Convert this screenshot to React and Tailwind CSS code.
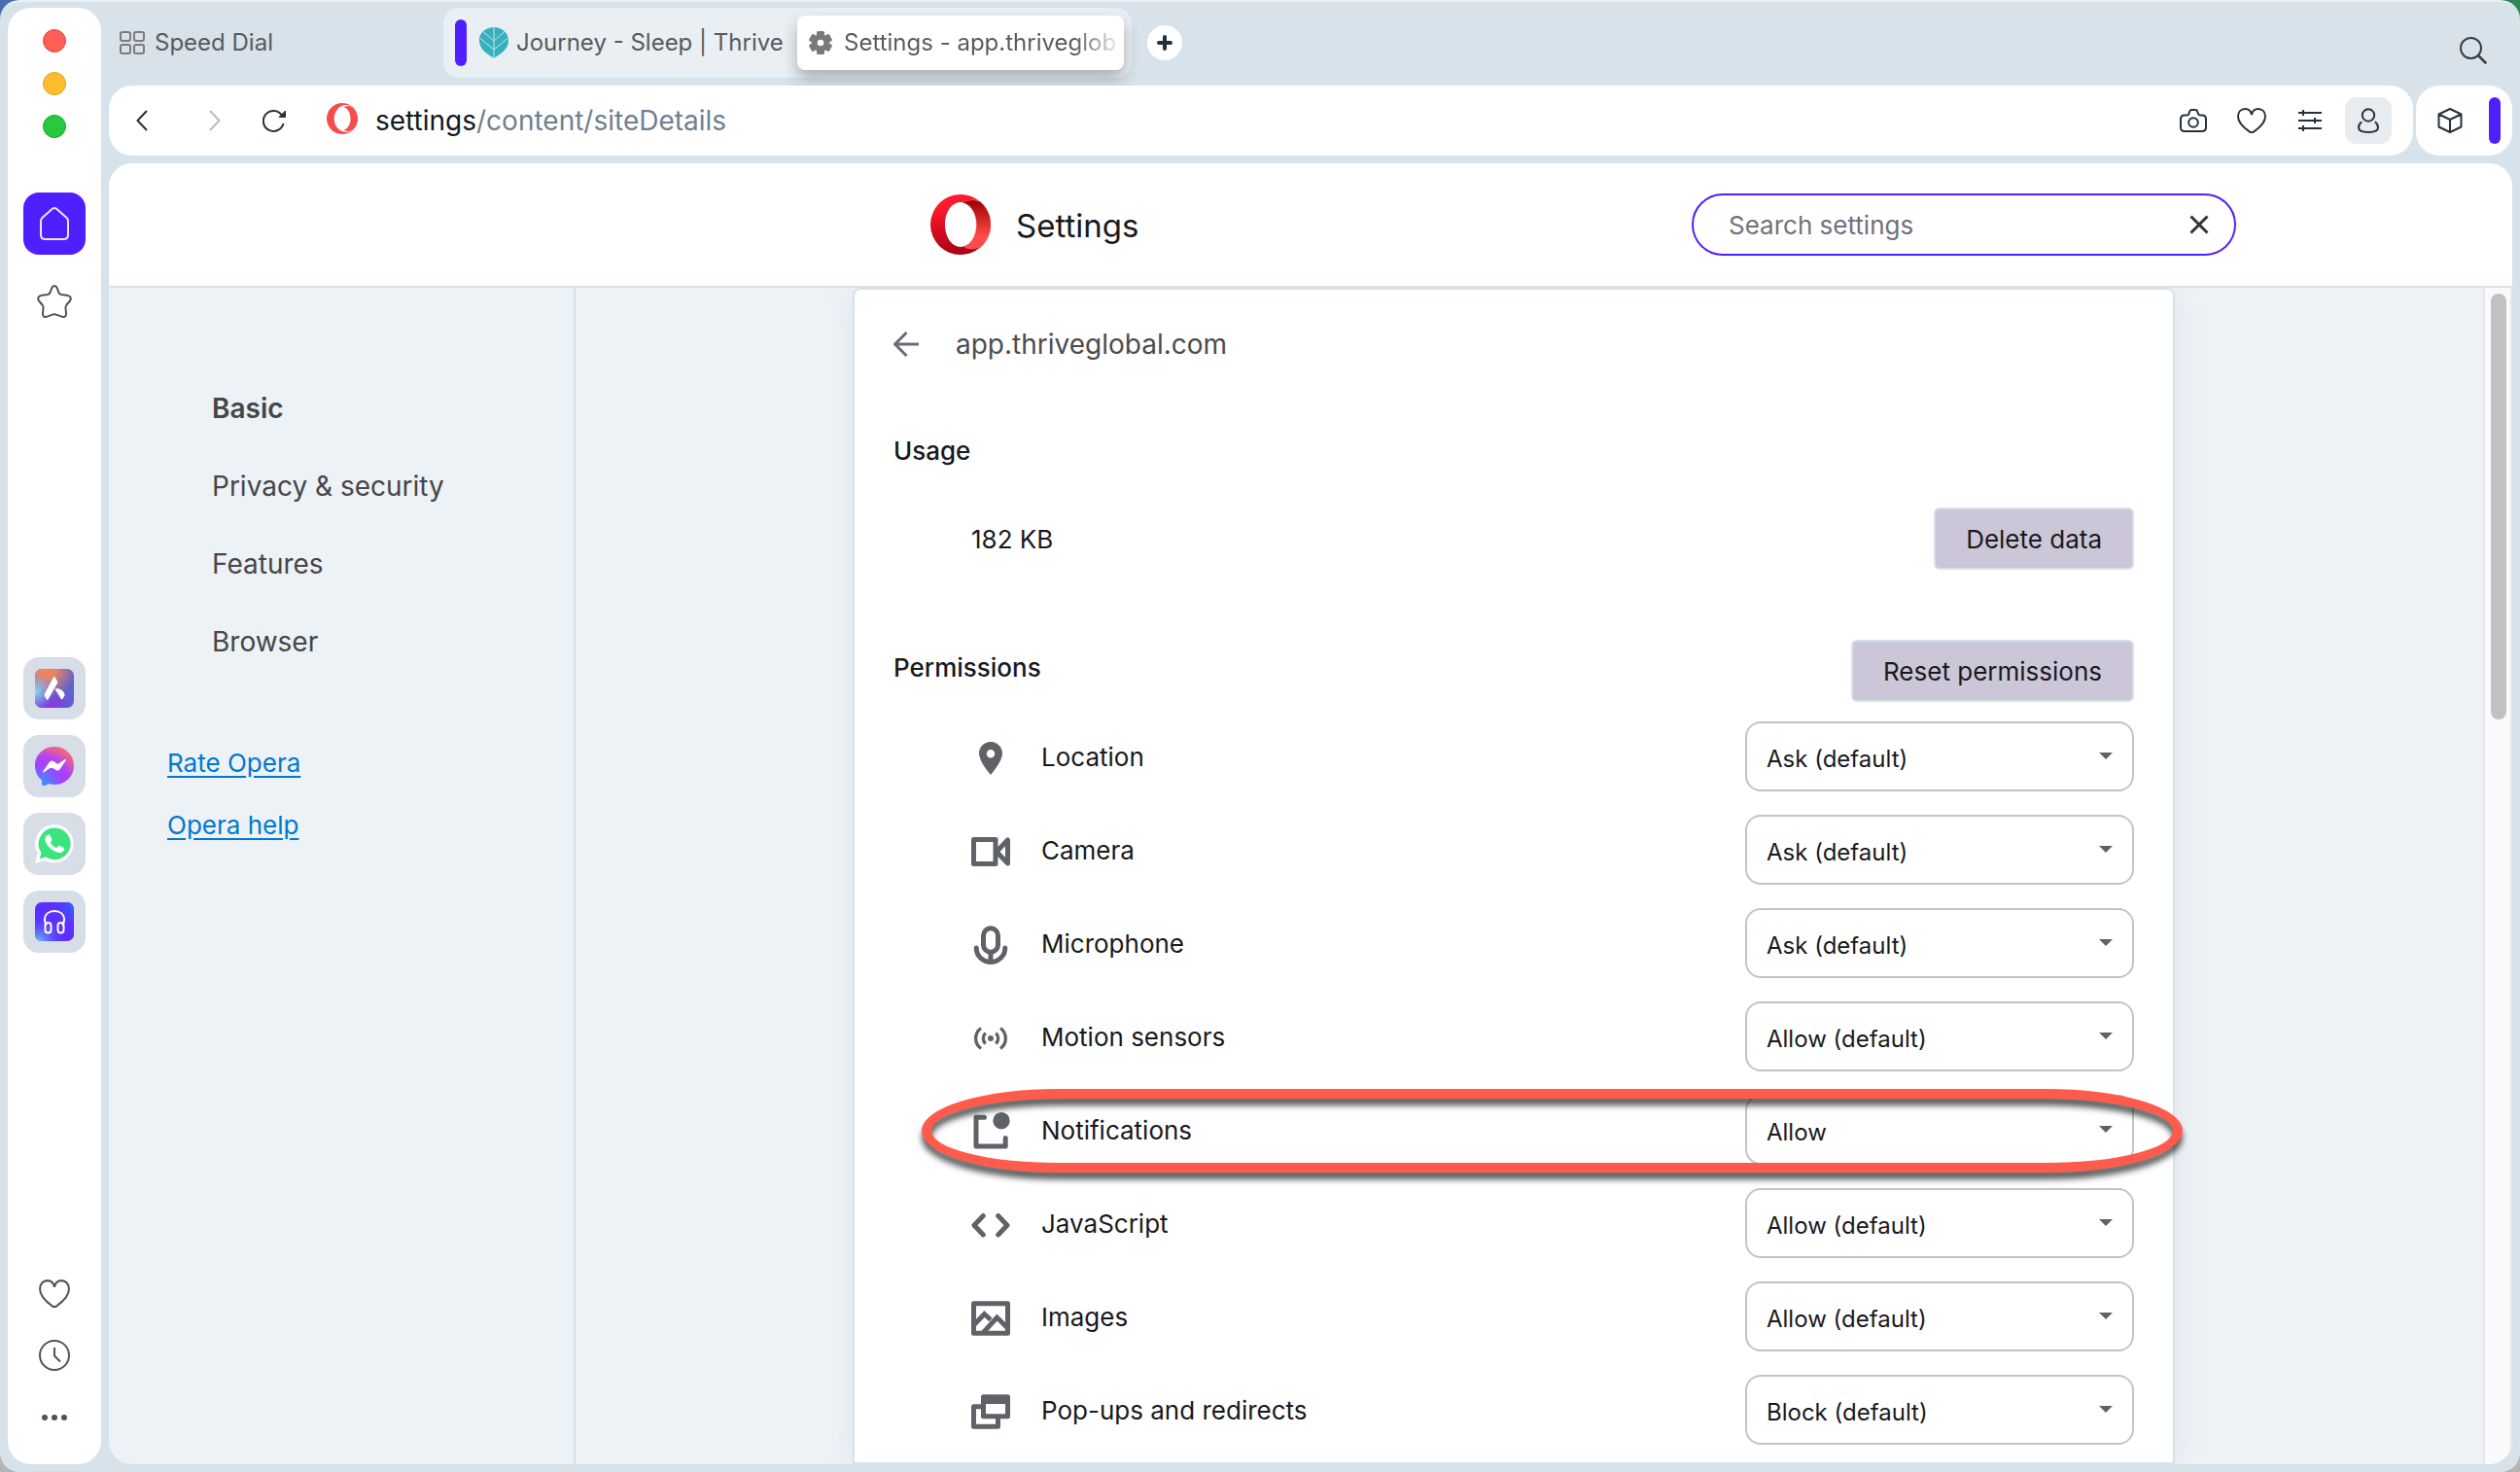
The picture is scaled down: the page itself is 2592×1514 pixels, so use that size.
import { useId, useState } from "react";

const HEART =
  "M15 7C14.300 3.200 11.500 1 8.200 1 4 1 1 4.200 1 9c0 7 7.500 12.500 12 15.600 1.400.9 2.600.9 4 0C21.500 21.500 29 16 29 9c0-4.800-3-8-7.200-8C18.500 1 15.700 3.200 15 7z";

const OPERA_LEFT =
  "M8.051 5.238c-1.328 1.566-2.186 3.883-2.246 6.480v.564c.061 2.598.918 4.912 2.246 6.479 1.721 2.236 4.279 3.654 7.139 3.654 1.756 0 3.400-.537 4.807-1.471C17.879 22.846 15.074 24 12 24c-.192 0-.383-.004-.57-.014C5.064 23.689 0 18.436 0 12 0 5.371 5.373 0 12 0h.045c3.055.012 5.840 1.166 7.953 3.055-1.408-.93-3.051-1.471-4.810-1.471-2.858 0-5.417 1.420-7.140 3.654h.003z";
const OPERA_RIGHT =
  "M24 12c0 3.556-1.545 6.748-4.002 8.945-3.078 1.500-5.946.451-6.896-.205 3.023-.664 5.307-4.320 5.307-8.740 0-4.422-2.283-8.075-5.307-8.740.949-.654 3.818-1.703 6.896-.205C22.455 5.250 24 8.444 24 12z";

function Line({ w, h, stroke = 2, className = "", children }) {
  return (
    <svg width={w} height={h} viewBox={`0 0 ${w} ${h}`} fill="none" stroke="currentColor" strokeWidth={stroke} className={`shrink-0 ${className}`} aria-hidden="true">
      {children}
    </svg>
  );
}

function OperaFlat() {
  return (
    <svg width="32" height="32" viewBox="0 0 24 24" fill="#f84c4b" className="shrink-0" aria-hidden="true">
      <path d={OPERA_LEFT} />
      <path d={OPERA_RIGHT} />
    </svg>
  );
}

function OperaLogo() {
  const id = useId();
  return (
    <svg width="62" height="62" viewBox="0 0 24 24" className="shrink-0" aria-hidden="true">
      <defs>
        <linearGradient id={`${id}l`} x1="0" y1="0" x2="0" y2="1">
          <stop offset="0.2" stopColor="#ff1b2d" />
          <stop offset="1" stopColor="#a70014" />
        </linearGradient>
        <linearGradient id={`${id}r`} x1="0" y1="0" x2="0" y2="1">
          <stop offset="0" stopColor="#9c0000" />
          <stop offset="0.75" stopColor="#ff4b4b" />
        </linearGradient>
      </defs>
      <path d={OPERA_RIGHT} fill={`url(#${id}r)`} stroke={`url(#${id}r)`} strokeWidth="0.2" />
      <path
        fillRule="evenodd"
        fill={`url(#${id}l)`}
        d="M12 0a12 12 0 1 0 0 24c3.074 0 5.879-1.154 7.998-3.055-2.800 1.350-5.400.8-6.896-.205-.35.080-.7.120-1.100.120-3.500 0-6.200-3.900-6.200-8.860s2.700-8.860 6.200-8.860c.4 0 .75.040 1.100.120 1.500-1 4.100-1.550 6.896-.205A11.970 11.970 0 0 0 12 0z"
      />
    </svg>
  );
}

function Leaf() {
  return (
    <svg width="30" height="32" viewBox="0 0 30 32" className="shrink-0" aria-hidden="true">
      <path d="M15 0c4 0 15 2.500 15 14 0 9.500-10 14.500-15 18C10 28.500 0 23.500 0 14 0 2.500 11 0 15 0z" fill="#36b0bd" />
      <path d="M15 0v32M15 14L4 4.500M15 14L26 4.500M15 23L1 11.500M15 23L29 11.500" stroke="#c9e6ec" fill="none" />
    </svg>
  );
}

function Gear() {
  return (
    <svg width="24" height="24" viewBox="0 0 24 24" fill="#7a7a7a" className="shrink-0" aria-hidden="true">
      <circle cx="12" cy="12" r="9" />
      <rect x="8" y="0" width="8" height="24" rx="1.500" />
      <rect x="8" y="0" width="8" height="24" rx="1.500" transform="rotate(60 12 12)" />
      <rect x="8" y="0" width="8" height="24" rx="1.500" transform="rotate(120 12 12)" />
      <circle cx="12" cy="12" r="3.300" fill="#fff" />
    </svg>
  );
}

function AriaIcon() {
  const id = useId();
  return (
    <svg width="40" height="40" viewBox="0 0 40 40" aria-hidden="true">
      <defs>
        <radialGradient id={`${id}a`} cx="0.3" cy="0" r="0.75">
          <stop offset="0" stopColor="#ff8552" />
          <stop offset="0.35" stopColor="#f08462" stopOpacity="0.9" />
          <stop offset="1" stopColor="#f08462" stopOpacity="0" />
        </radialGradient>
        <radialGradient id={`${id}b`} cx="0" cy="0.58" r="0.5">
          <stop offset="0" stopColor="#86e0f2" />
          <stop offset="1" stopColor="#86b0f2" stopOpacity="0" />
        </radialGradient>
        <radialGradient id={`${id}c`} cx="0.4" cy="1" r="0.6">
          <stop offset="0" stopColor="#8d32e4" />
          <stop offset="1" stopColor="#8d32e4" stopOpacity="0" />
        </radialGradient>
      </defs>
      <rect width="40" height="40" rx="7" fill="#6062cc" />
      <rect width="40" height="40" rx="7" fill={`url(#${id}c)`} />
      <rect width="40" height="40" rx="7" fill={`url(#${id}a)`} />
      <rect width="40" height="40" rx="7" fill={`url(#${id}b)`} />
      <path d="M20.500 8.500l2.700 4.500c.3.500.3 1 0 1.500L13.500 31.200c-.5.700-1.300.7-1.700 0l-2-3.700c-.3-.6-.3-1.200 0-1.800l9-17c.5-.8 1.200-.9 1.700-.2z" fill="#fff" />
      <path d="M21.500 20.200c4.500 0 8 2 9 5.800.2.700 0 1.300-.3 1.800l-1.700 3c-.5.800-1.300.8-1.800 0l-5.800-9.600c-.3-.6 0-1 .6-1z" fill="#fff" />
    </svg>
  );
}

function MessengerIcon() {
  const id = useId();
  return (
    <svg width="40" height="40" viewBox="0 0 40 40" aria-hidden="true">
      <defs>
        <radialGradient id={id} cx="0.18" cy="1" r="1.100">
          <stop offset="0" stopColor="#2f9cff" />
          <stop offset="0.5" stopColor="#a440ff" />
          <stop offset="0.68" stopColor="#b145f2" />
          <stop offset="1" stopColor="#ff6a70" />
        </radialGradient>
      </defs>
      <path d="M20 0c11.300 0 20 8.500 20 19.500S31.300 39 20 39c-1.900 0-3.800-.3-5.600-.8l-4.600 1.700c-1.500.6-2.800.1-2.800-1.500v-3.900C2.500 31 0 25.500 0 19.500 0 8.500 8.700 0 20 0z" fill={`url(#${id})`} />
      <path d="M8.700 25.800l6.600-9.300c.9-1.200 2.500-1.400 3.700-.6l4.300 3 8-5.200-6.200 9c-.9 1.200-2.500 1.500-3.700.6l-4.500-3.200z" fill="#fff" stroke="#fff" strokeWidth="1.400" strokeLinejoin="round" />
    </svg>
  );
}

function WhatsAppIcon() {
  return (
    <svg width="40" height="40" viewBox="0 0 40 40" aria-hidden="true">
      <path d="M20 0a19.700 19.700 0 1 1-9.500 37L0 39.800l2.900-10.200A19.700 19.700 0 0 1 20 0z" fill="#fff" />
      <path d="M20 3.400a16.400 16.400 0 1 1-8.700 30.200l-6.600 1.700 1.800-6.300A16.400 16.400 0 0 1 20 3.400z" fill="#3be47f" />
      <path d="M12.600 11c.8-.8 2.600-.9 3.200.5l1.500 3.600c.3.800.1 1.400-.5 2l-1 1.200c1.300 2.700 3.500 4.800 6.300 6l1.600-1.900c.5-.6 1.100-.7 1.800-.4l3.700 1.700c.9.500 1.100 1.200.8 2.200-.8 2.400-3.100 3.500-5.500 3-7-1.500-13-7.500-14.100-13-.4-2.100.6-3.700 2.200-4.900z" fill="#fff" />
    </svg>
  );
}

function PlayerIcon() {
  const id = useId();
  return (
    <svg width="40" height="40" viewBox="0 0 40 40" aria-hidden="true">
      <defs>
        <radialGradient id={`${id}a`} cx="0.1" cy="1" r="0.7">
          <stop offset="0" stopColor="#69b8ff" />
          <stop offset="1" stopColor="#5a35ff" stopOpacity="0" />
        </radialGradient>
        <radialGradient id={`${id}b`} cx="1" cy="0.1" r="0.6">
          <stop offset="0" stopColor="#2a66ff" />
          <stop offset="1" stopColor="#5a35ff" stopOpacity="0" />
        </radialGradient>
      </defs>
      <rect width="40" height="40" rx="7" fill="#5b2fff" />
      <rect width="40" height="40" rx="7" fill={`url(#${id}b)`} />
      <rect width="40" height="40" rx="7" fill={`url(#${id}a)`} />
      <g fill="none" stroke="#fff" strokeWidth="2" strokeLinecap="round">
        <path d="M11.500 23c-1-1.700-1.500-3.400-1.500-5C10 12.500 14 9 20 9s10 3.500 10 9c0 1.600-.5 3.300-1.500 5" />
        <rect x="10.500" y="21" width="6" height="10.500" rx="3" />
        <rect x="23.500" y="21" width="6" height="10.500" rx="3" />
      </g>
    </svg>
  );
}

const permissionArt = {
  location: (
    <path fill="currentColor" stroke="none" fillRule="evenodd" d="M20 3C13.300 3 8 8.200 8 14.800 8 23.500 20 37 20 37s12-13.500 12-22.200C32 8.200 26.700 3 20 3zm0 8a4.200 4.200 0 1 1 0 8.400 4.200 4.200 0 0 1 0-8.400z" />
  ),
  camera: (
    <g strokeLinejoin="round">
      <path d="M2.500 7.500H25v25H2.500z" />
      <path d="M26 20L37.500 8v24z" />
    </g>
  ),
  microphone: (
    <g strokeLinecap="round">
      <rect x="12.500" y="2.800" width="15" height="24.500" rx="7.500" />
      <path d="M5.200 23a14.800 14.500 0 0 0 29.600 0" />
      <path d="M20 28v9" />
    </g>
  ),
  motion: (
    <g strokeWidth="3.300">
      <path d="M10 9.500A13 13 0 0 0 10 30.500M30 9.500A13 13 0 0 1 30 30.500M14.700 14.500A7.500 7.500 0 0 0 14.700 25.500M25.300 14.500A7.500 7.500 0 0 1 25.300 25.500" />
      <circle cx="20" cy="20" r="3" fill="currentColor" stroke="none" />
    </g>
  ),
  notifications: (
    <g strokeLinecap="round" strokeLinejoin="round">
      <path d="M13.500 5.200H5V35h30.200v-8.500" />
      <circle cx="31" cy="8.700" r="8.700" fill="currentColor" stroke="none" />
    </g>
  ),
  code: <path strokeLinecap="round" strokeLinejoin="round" d="M12.300 10.500L3 20.200l9.300 9.700M27.700 10.500L37 20.200l-9.300 9.700" />,
  images: (
    <g strokeLinejoin="round">
      <rect x="2.500" y="4.800" width="35" height="30.500" />
      <path d="M3.500 26l10-10.500 6.500 6M12 35l14.500-16L38 30.500" strokeLinejoin="miter" />
    </g>
  ),
  popups: (
    <g strokeLinejoin="round">
      <path d="M10 14.800H2.500v20.400h25V27" />
      <rect x="12.500" y="4.800" width="25" height="20" />
      <path d="M12.500 8h25" strokeWidth="8" />
    </g>
  ),
};

const permissions = [
  { icon: "location", label: "Location", value: "Ask (default)" },
  { icon: "camera", label: "Camera", value: "Ask (default)" },
  { icon: "microphone", label: "Microphone", value: "Ask (default)" },
  { icon: "motion", label: "Motion sensors", value: "Allow (default)" },
  { icon: "notifications", label: "Notifications", value: "Allow", marked: true },
  { icon: "code", label: "JavaScript", value: "Allow (default)" },
  { icon: "images", label: "Images", value: "Allow (default)" },
  { icon: "popups", label: "Pop-ups and redirects", value: "Block (default)" },
];

function PermissionRow({ icon, label, value, marked }) {
  const id = useId();
  const [choice, setChoice] = useState(value);
  const options = [...new Set([value, "Ask", "Allow", "Block"])];
  return (
    <li className="relative flex h-24 items-center pl-20">
      <Line w={40} h={40} stroke={5} className="mt-1 text-[#5f6368]">
        {permissionArt[icon]}
      </Line>
      <label htmlFor={id} className="ml-8 flex-1">
        {label}
      </label>
      <div className="relative w-[400px]">
        <select
          id={id}
          value={choice}
          onChange={(e) => setChoice(e.target.value)}
          className="h-[72px] w-full appearance-none rounded-2xl border-2 border-[#c4c4c4] bg-white pt-1.5 pl-5 text-2xl text-[#19191d]"
        >
          {options.map((o) => (
            <option key={o}>{o}</option>
          ))}
        </select>
        <svg width="14" height="7" viewBox="0 0 14 7" className="pointer-events-none absolute top-8 right-[22px]" aria-hidden="true">
          <path d="M0 0h14L7 7z" fill="#5f6368" />
        </svg>
      </div>
      {marked && (
        <div className="pointer-events-none absolute top-[6px] -right-[50px] left-[29px] h-[86px] rounded-[140px/43px] border-10 border-[#ff5b4d] drop-shadow-[0_7px_3px_rgba(0,0,0,0.65)]" />
      )}
    </li>
  );
}

function Sidebar() {
  const round = "flex h-16 w-16 items-center justify-center rounded-2xl";
  return (
    <aside className="flex w-24 shrink-0 flex-col items-center rounded-3xl bg-white pt-[22px] pb-4 text-[#4b535e]">
      <div className="flex flex-col gap-5">
        <button aria-label="Close" className="size-6 rounded-full border border-[#e2463f] bg-[#ff5f57]" />
        <button aria-label="Minimise" className="size-6 rounded-full border border-[#e1a116] bg-[#febc2e]" />
        <button aria-label="Zoom" className="size-6 rounded-full border border-[#12ac28] bg-[#28c840]" />
      </div>
      <button aria-label="Home" className={`${round} mt-14 bg-[#4f1fff] text-[#ece8ff]`}>
        <Line w={30} h={34}>
          <path d="M12.300 2.200c1.700-1.500 3.700-1.500 5.400 0l9.600 8.600c1.200 1 1.700 2.200 1.700 3.700V28.500c0 3-1.500 4.500-4.500 4.500h-19C2.500 33 1 31.500 1 28.500v-14c0-1.500.5-2.700 1.700-3.700z" />
        </Line>
      </button>
      <button aria-label="Favourites" className={`${round} mt-4`}>
        <Line w={36} h={34}>
          <path d="M15.300 3.200c1-2.900 4.400-2.900 5.400 0l1.800 4.800c.5 1.200 1.500 1.800 2.700 2l5.800.8c3.500.5 5 3.200 2.500 6.200l-3 3.500c-.8 1-1.100 2-1 3.300l.5 5.200c.2 3.500-1.500 4.800-4.500 3.600l-5.500-2c-1.400-.5-2.600-.5-4 0l-5.500 2c-3 1.200-4.700-.1-4.500-3.600l.5-5.200c.1-1.300-.2-2.300-1-3.300l-3-3.500C0 14 1.500 11.300 5 10.800l5.800-.8c1.200-.2 2.200-.8 2.700-2z" />
        </Line>
      </button>
      <div className="my-auto flex flex-col gap-4 pt-4">
        <button aria-label="Aria" className={`${round} bg-[#d7dee7]`}>
          <AriaIcon />
        </button>
        <button aria-label="Messenger" className={`${round} bg-[#d7dee7]`}>
          <MessengerIcon />
        </button>
        <button aria-label="WhatsApp" className={`${round} bg-[#d7dee7]`}>
          <WhatsAppIcon />
        </button>
        <button aria-label="Player" className={`${round} bg-[#d7dee7]`}>
          <PlayerIcon />
        </button>
      </div>
      <button aria-label="Bookmarks" className={round}>
        <svg width="32" height="29" viewBox="0 0 30 26" preserveAspectRatio="none" fill="none" stroke="currentColor" strokeWidth="1.900" aria-hidden="true">
          <path d={HEART} />
        </svg>
      </button>
      <button aria-label="History" className={round}>
        <Line w={32} h={32}>
          <circle cx="16" cy="16" r="15" />
          <path d="M16 8v8.500l6 6" />
        </Line>
      </button>
      <button aria-label="More" className={round}>
        <svg width="26" height="6" viewBox="0 0 26 6" fill="currentColor" aria-hidden="true">
          <circle cx="3" cy="3" r="3" />
          <circle cx="13" cy="3" r="3" />
          <circle cx="23" cy="3" r="3" />
        </svg>
      </button>
    </aside>
  );
}

function TabBar() {
  return (
    <div className="flex h-[72px] items-center text-2xl text-[#58595b]">
      <button className="flex w-[344px] items-center gap-2.5 pl-[11px]">
        <Line w={26} h={24} stroke={2} className="text-[#7a7c7e]">
          <rect x="1" y="1" width="10" height="9" rx="2" />
          <rect x="15" y="1" width="10" height="9" rx="2" />
          <rect x="1" y="14" width="10" height="9" rx="2" />
          <rect x="15" y="14" width="10" height="9" rx="2" />
        </Line>
        Speed Dial
      </button>
      <div className="flex h-full items-center rounded-2xl bg-[#eaeff4] px-2">
        <span className="ml-1 h-12 w-3 rounded-full bg-[#4f1fff]" />
        <button className="ml-[13px] flex w-[327px] items-center gap-2 whitespace-nowrap">
          <Leaf />
          Journey - Sleep | Thrive
        </button>
        <button className="flex h-14 w-[336px] items-center gap-3 rounded-lg bg-white pl-3 shadow-[0_8px_16px_rgba(0,0,0,0.28)]">
          <Gear />
          <span className="flex-1 bg-linear-to-r from-[#58595b] from-82% to-transparent bg-clip-text text-left whitespace-nowrap text-transparent">
            Settings - app.thriveglob
          </span>
        </button>
      </div>
      <button aria-label="New tab" className="ml-4 flex size-9 items-center justify-center rounded-full bg-white text-[#22303a]">
        <Line w={16} h={16} stroke={4}>
          <path d="M8 2v12M2 8h12" strokeLinecap="round" />
        </Line>
      </button>
      <button aria-label="Search tabs" className="mt-4 mr-[26px] ml-auto text-[#3d3d3d]">
        <Line w={28} h={28}>
          <circle cx="11.500" cy="11.500" r="10.500" />
          <path d="M19 19l7.500 7.500" strokeLinecap="round" strokeWidth="2.500" />
        </Line>
      </button>
    </div>
  );
}

function AddressBar() {
  return (
    <div className="mt-2 flex h-[72px] gap-[3px] text-[#25323c]">
      <div className="flex flex-1 items-center rounded-3xl bg-white pr-[22px] pl-7">
        <button aria-label="Back">
          <Line w={12} h={22}>
            <path d="M11 1L1.500 11 11 21" />
          </Line>
        </button>
        <button aria-label="Forward" className="ml-[63px] text-[#b9bdc1]">
          <Line w={12} h={22}>
            <path d="M1 1l9.500 10L1 21" />
          </Line>
        </button>
        <button aria-label="Reload" className="ml-[43px]">
          <Line w={24} h={24}>
            <path d="M21.500 15A10.500 10.500 0 1 1 20 6.500" />
            <path d="M17 8.500h6.500V2z" fill="currentColor" strokeWidth="1" strokeLinejoin="round" />
          </Line>
        </button>
        <div className="mr-[18px] ml-[42px] pb-1">
          <OperaFlat />
        </div>
        <a href="#settings" className="text-[28px] text-[#6e7f91]">
          <span className="text-[#14181c]">settings</span>/content/siteDetails
        </a>
        <button aria-label="Snapshot" className="ml-auto">
          <Line w={28} h={24}>
            <path d="M5 6.500h2.500c1 0 1.600-.5 1.900-1.500l.8-2.400c.3-1 .9-1.600 2-1.600h4c1.100 0 1.700.6 2 1.600l.8 2.400c.3 1 .9 1.500 1.900 1.500H23c2.600 0 4 1.200 4 4V19c0 2.800-1.200 4-4 4H5c-2.800 0-4-1.200-4-4v-8.500c0-2.800 1.400-4 4-4z" />
            <circle cx="14" cy="14" r="4.800" />
          </Line>
        </button>
        <button aria-label="Add to favourites" className="ml-[31px]">
          <Line w={30} h={26}>
            <path d={HEART} />
          </Line>
        </button>
        <button aria-label="Easy setup" className="ml-[33px]">
          <Line w={24} h={22}>
            <path d="M0 3h24M0 11h24M0 19h24M5 0v6M17 8v6M5 16v6" />
          </Line>
        </button>
        <button aria-label="Profile" className="ml-6 flex size-12 items-center justify-center rounded-xl bg-[#e7ecf0]">
          <Line w={22} h={26}>
            <circle cx="11" cy="7.500" r="6.200" />
            <path d="M4.200 14.200C2 15.800 1 18 1 20.300 1 23.500 4.500 25 11 25s10-1.500 10-4.700c0-2.300-1-4.500-3.200-6.100" />
          </Line>
        </button>
      </div>
      <div className="flex items-center rounded-3xl bg-white pr-3 pl-[22px]">
        <button aria-label="Extensions">
          <Line w={26} h={26}>
            <path d="M13 1l11.500 5.500v13L13 25 1.500 19.500v-13zM1.500 6.500L13 12l11.500-5.500M13 12v13" strokeLinejoin="round" />
          </Line>
        </button>
        <span className="ml-[27px] h-12 w-3 rounded-full bg-[#4f1fff]" />
      </div>
    </div>
  );
}

function SettingsHeader() {
  return (
    <header className="flex h-32 shrink-0 items-center justify-between border-b-2 border-[#d8e2ea] bg-white pr-[284px] pl-[845px]">
      <div className="flex items-center gap-[26px]">
        <OperaLogo />
        <h1 className="pt-1 text-[33px]">Settings</h1>
      </div>
      <form role="search" onSubmit={(e) => e.preventDefault()} className="flex h-16 w-[560px] items-center rounded-full border-2 border-[#4f1fff] pr-[26px] pl-9">
        <input aria-label="Search settings" placeholder="Search settings" className="min-w-0 flex-1 text-[26px] outline-none placeholder:text-[#71717a]" />
        <button type="reset" aria-label="Clear search" className="text-[#333]">
          <Line w={20} h={20} stroke={3}>
            <path d="M1.500 1.500l17 17M18.500 1.500l-17 17" />
          </Line>
        </button>
      </form>
    </header>
  );
}

function SettingsNav() {
  return (
    <nav className="w-[480px] shrink-0 border-r-2 border-[#d8e2ea] pt-[84px]">
      <ul className="pl-[106px] text-[28px] text-[#454648]">
        <li className="flex h-20 items-center font-semibold">
          <a href="#basic">Basic</a>
        </li>
        <li className="flex h-20 items-center">
          <a href="#privacy">Privacy &amp; security</a>
        </li>
        <li className="flex h-20 items-center">
          <a href="#features">Features</a>
        </li>
        <li className="flex h-20 items-center">
          <a href="#browser">Browser</a>
        </li>
      </ul>
      <ul className="mt-[52px] pl-[60px] text-[26px] text-[#0078d0] underline underline-offset-4">
        <li className="flex h-16 items-center">
          <a href="#rate">Rate Opera</a>
        </li>
        <li className="flex h-16 items-center">
          <a href="#help">Opera help</a>
        </li>
      </ul>
    </nav>
  );
}

function ActionButton({ children }) {
  return <button className="h-16 rounded-md border-2 border-[#d5e1eb] bg-[#ccc7d8] px-[31px]">{children}</button>;
}

function SiteDetails() {
  return (
    <main className="min-w-0 flex-1 overflow-hidden pr-8">
      <div className="mx-auto min-h-full max-w-[1360px] rounded-t-lg border-2 border-[#d8e2ea] bg-white px-10 text-[26px] shadow-[0_4px_32px_rgba(120,140,160,0.12)]">
        <div className="flex h-28 items-center gap-[38px]">
          <button aria-label="Back" className="text-[#6b6b76]">
            <Line w={26} h={26} stroke={3}>
              <path d="M26 13H2M13.500 1L1.500 13l12 12" />
            </Line>
          </button>
          <h2 className="text-[28px] text-[#4c4c4e]">app.thriveglobal.com</h2>
        </div>
        <h3 className="flex h-[106px] items-center font-medium">Usage</h3>
        <div className="flex h-[76px] items-center justify-between pl-20">
          <span>182 KB</span>
          <ActionButton>Delete data</ActionButton>
        </div>
        <div className="mt-[58px] flex h-20 items-center justify-between">
          <h3 className="mb-2 font-medium">Permissions</h3>
          <ActionButton>Reset permissions</ActionButton>
        </div>
        <ul>
          {permissions.map((p) => (
            <PermissionRow key={p.label} {...p} />
          ))}
        </ul>
      </div>
    </main>
  );
}

export default function App() {
  return (
    <div className="h-screen bg-[linear-gradient(to_top,#b4b4b4_50%,transparent_50%),linear-gradient(to_right,#4a6ead_50%,#2c8a55_50%)] font-['Inter',sans-serif] text-[#19191d]">
      <div className="flex h-full gap-2 overflow-hidden rounded-[20px] border-t-2 border-[#eaeff4] bg-[#d8e2ea] px-2 pt-1.5 pb-2">
        <Sidebar />
        <div className="flex min-w-0 flex-1 flex-col">
          <TabBar />
          <AddressBar />
          <div className="mt-2 flex min-h-0 flex-1 flex-col overflow-hidden rounded-3xl bg-[#edf2f6]">
            <SettingsHeader />
            <div className="flex min-h-0 flex-1">
              <SettingsNav />
              <SiteDetails />
              <div className="w-[30px] shrink-0 border-r-2 border-l-2 border-[#e8e8e8] bg-[#fafafa] pt-1.5 pr-1 pl-[6px]">
                <div className="h-[438px] rounded-full bg-[#c1c1c1]" />
              </div>
            </div>
          </div>
        </div>
      </div>
    </div>
  );
}
